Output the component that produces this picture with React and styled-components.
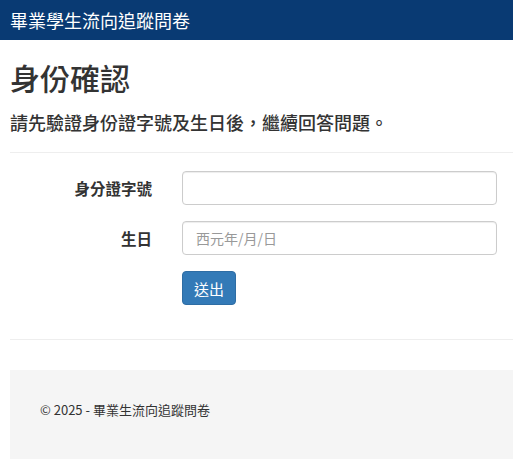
import styled, { createGlobalStyle } from 'styled-components'

const GlobalStyle = createGlobalStyle`
  html, body {
    margin: 0;
    padding: 0;
    background: #fff;
  }
  body {
    font-family: "Noto Sans CJK TC", "Noto Sans", "Liberation Sans", sans-serif;
    color: #333;
    overflow: hidden;
  }
`

const Navbar = styled.header`
  height: 40px;
  background: #093a73;
  display: flex;
  align-items: center;
  padding: 0 10px;
`

const Brand = styled.span`
  color: #fff;
  font-size: 18px;
  line-height: 1;
`

const Container = styled.main`
  padding-left: 10px;
`

const Title = styled.h2`
  margin: 19px 0 0;
  font-size: 30px;
  font-weight: 500;
  line-height: 36px;
  color: #333;
`

const Lead = styled.p`
  margin: 14px 0 0;
  font-size: 18px;
  font-weight: 500;
  line-height: 26px;
`

const Rule = styled.hr`
  border: 0;
  border-top: 1px solid #eee;
  margin: ${(p) => p.$top}px 0 0;
`

const Form = styled.form`
  display: grid;
  grid-template-columns: 142px 1fr;
  column-gap: 30px;
  row-gap: 16px;
  padding-right: 16px;
  margin-top: 18px;
  align-items: center;
`

const Label = styled.label`
  text-align: right;
  font-size: 15.5px;
  font-weight: 700;
`

const Input = styled.input`
  box-sizing: border-box;
  width: 100%;
  height: 34px;
  padding: 6px 13px;
  border: 1px solid #ccc;
  border-radius: 4px;
  font-family: inherit;
  font-size: 14px;
  color: #555;
  box-shadow: inset 0 1px 1px rgba(0, 0, 0, 0.075);
  &::placeholder {
    color: #999;
  }
`

const Button = styled.button`
  grid-column: 2;
  justify-self: start;
  height: 34px;
  padding: 0 11px;
  border: 1px solid #2e6da4;
  border-radius: 4px;
  background: #337ab7;
  color: #fff;
  font-family: inherit;
  font-size: 15px;
`

const Footer = styled.footer`
  margin-top: 30px;
  background: #f5f5f5;
  height: 60px;
  padding: 30px 30px 0;
  font-size: 13px;
  line-height: 20px;
  color: #333;
`

export default function App() {
  return (
    <>
      <GlobalStyle />
      <Navbar>
        <Brand>畢業學生流向追蹤問卷</Brand>
      </Navbar>
      <Container>
        <Title>身份確認</Title>
        <Lead>請先驗證身份證字號及生日後，繼續回答問題。</Lead>
        <Rule $top={17} />
        <Form onSubmit={(e) => e.preventDefault()}>
          <Label htmlFor="idno">身分證字號</Label>
          <Input id="idno" type="text" />
          <Label htmlFor="birthday">生日</Label>
          <Input id="birthday" type="text" placeholder="西元年/月/日" />
          <Button type="submit">送出</Button>
        </Form>
        <Rule $top={34} />
        <Footer>© 2025 - 畢業生流向追蹤問卷</Footer>
      </Container>
    </>
  )
}
